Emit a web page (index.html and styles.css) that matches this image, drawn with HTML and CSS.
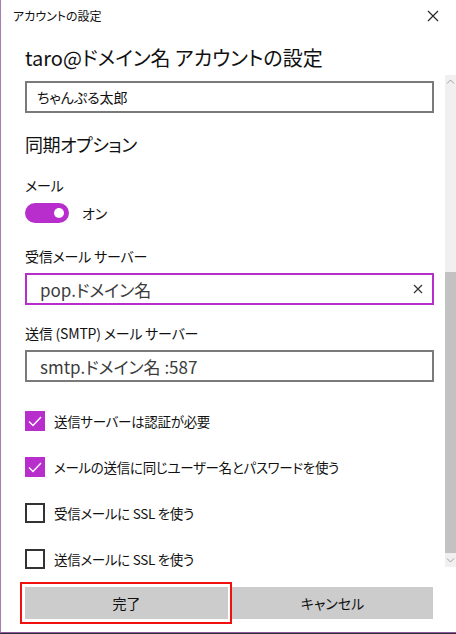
FILE: index.html
```html
<!DOCTYPE html>
<html>
<head>
    <title>アカウントの設定</title>
    <link rel="stylesheet" href="styles.css">
</head>
<body>
    <div class="window">
        <div class="titlebar">
            <span class="title">アカウントの設定</span>
            <svg class="close" width="12" height="12" viewBox="0 0 12 12">
                <path d="M1 1 L11 11 M11 1 L1 11" stroke="#222" stroke-width="1.1" fill="none"/>
            </svg>
        </div>
        <h1 class="heading">taro@ドメイン名 アカウントの設定</h1>
        <div class="scroll-row">
            <div class="content">
                <div class="textbox small">ちゃんぷる太郎</div>

                <h2 class="section">同期オプション</h2>

                <div class="label">メール</div>
                <div class="toggle-row">
                    <span class="toggle"><span class="knob"></span></span>
                    <span class="toggle-text">オン</span>
                </div>

                <div class="label gap">受信メール サーバー</div>
                <div class="textbox large focused">
                    <span>pop.ドメイン名</span>
                    <svg class="clear" width="10" height="10" viewBox="0 0 10 10">
                        <path d="M1 1 L9 9 M9 1 L1 9" stroke="#333" stroke-width="1.2" fill="none"/>
                    </svg>
                </div>

                <div class="label gap">送信 (SMTP) メール サーバー</div>
                <div class="textbox large">smtp.ドメイン名 :587</div>

                <div class="checks">
                    <div class="check-row">
                        <span class="checkbox checked">
                            <svg width="20" height="20" viewBox="0 0 20 20"><path d="M4 10.5 L8 14.5 L16 6" stroke="#fff" stroke-width="1.4" fill="none"/></svg>
                        </span>
                        <span>送信サーバーは認証が必要</span>
                    </div>
                    <div class="check-row">
                        <span class="checkbox checked">
                            <svg width="20" height="20" viewBox="0 0 20 20"><path d="M4 10.5 L8 14.5 L16 6" stroke="#fff" stroke-width="1.4" fill="none"/></svg>
                        </span>
                        <span>メールの送信に同じユーザー名とパスワードを使う</span>
                    </div>
                    <div class="check-row">
                        <span class="checkbox"></span>
                        <span>受信メールに SSL を使う</span>
                    </div>
                    <div class="check-row">
                        <span class="checkbox"></span>
                        <span>送信メールに SSL を使う</span>
                    </div>
                </div>
            </div>
            <div class="scrollbar">
                <div class="arrow">
                    <svg width="11" height="8" viewBox="0 0 11 8"><path d="M2 5.5 L5.5 2 L9 5.5" stroke="#a0a0a0" stroke-width="1" fill="none"/></svg>
                </div>
                <div class="track"></div>
                <div class="thumb"></div>
                <div class="arrow">
                    <svg width="11" height="8" viewBox="0 0 11 8"><path d="M2 2.5 L5.5 6 L9 2.5" stroke="#a0a0a0" stroke-width="1" fill="none"/></svg>
                </div>
            </div>
        </div>
        <div class="footer">
            <div class="highlight">
                <button class="btn">完了</button>
            </div>
            <button class="btn cancel">キャンセル</button>
        </div>
    </div>
</body>
</html>
```

FILE: styles.css
```css
html, body {
    margin: 0;
    padding: 0;
}

body {
    width: 456px;
    height: 634px;
    background-color: #2d2a3a;
    font-family: "Noto Sans CJK JP", "Noto Sans", sans-serif;
    font-feature-settings: "palt";
    color: #111;
    overflow: hidden;
}

.window {
    height: 632px;
    background-color: #fff;
    border-left: 1px solid #a77db3;
    border-bottom: 1px solid #8c5a9c;
    display: flex;
    flex-direction: column;
}

.titlebar {
    height: 32px;
    display: flex;
    align-items: center;
    justify-content: space-between;
    padding: 0 17px 0 12px;
}

.title {
    font-size: 12px;
}

.heading {
    margin: 0;
    height: 44px;
    box-sizing: border-box;
    padding: 13px 0 0 24px;
    font-size: 20px;
    font-weight: normal;
    line-height: 28px;
}

.scroll-row {
    display: flex;
}

.content {
    flex: 1;
    padding: 6px 11px 13px 24px;
}

.textbox {
    height: 32px;
    box-sizing: border-box;
    border: 2px solid #7a7a7a;
    display: flex;
    align-items: center;
    justify-content: space-between;
}

.textbox.small {
    font-size: 14px;
    padding-left: 10px;
}

.textbox.large {
    font-size: 17px;
    color: #3c3c3c;
    padding: 0 9px 0 13px;
}

.textbox.focused {
    border-color: #b72ecd;
}

.section {
    margin: 19px 0 0;
    font-size: 18px;
    font-weight: normal;
    line-height: 24px;
    letter-spacing: -0.5px;
}

.label {
    margin-top: 19px;
    font-size: 14px;
    line-height: 20px;
    letter-spacing: -0.2px;
}

.label.gap {
    margin-top: 23px;
    margin-bottom: 7px;
}

.textbox + .label.gap {
    margin-top: 18px;
}

.toggle-row {
    margin-top: 8px;
    display: flex;
    align-items: center;
    height: 20px;
}

.toggle {
    width: 44px;
    height: 20px;
    border-radius: 10px;
    background-color: #b72ecd;
    display: flex;
    align-items: center;
    justify-content: flex-end;
    padding-right: 5px;
    box-sizing: border-box;
}

.knob {
    width: 10px;
    height: 10px;
    border-radius: 50%;
    background-color: #fff;
}

.toggle-text {
    margin-left: 13px;
    font-size: 14px;
}

.checks {
    margin-top: 29px;
    display: flex;
    flex-direction: column;
    gap: 26px;
}

.check-row {
    display: flex;
    align-items: center;
    height: 20px;
    font-size: 13.5px;
    letter-spacing: -0.3px;
}

.checkbox {
    width: 20px;
    height: 20px;
    box-sizing: border-box;
    border: 2px solid #333;
    margin-right: 9px;
    display: flex;
}

.checkbox.checked {
    border: none;
    background-color: #b72ecd;
}

.scrollbar {
    width: 11px;
    height: 492px;
    background-color: #f0f0f0;
    display: flex;
    flex-direction: column;
}

.arrow {
    height: 14px;
    display: flex;
    align-items: center;
    justify-content: center;
}

.track {
    flex: 1;
}

.thumb {
    height: 281px;
    background-color: #c2c2c2;
}

.footer {
    margin-top: auto;
    display: flex;
    padding: 0 22px 8px 19px;
}

.highlight {
    border: 2px solid #f01010;
    padding: 3px 2px 3px 3px;
}

.btn {
    width: 203px;
    height: 32px;
    border: none;
    background-color: #cccccc;
    font-family: "Noto Sans CJK JP", "Noto Sans", sans-serif;
    font-feature-settings: "palt";
    font-size: 14px;
    color: #111;
    padding: 0;
}

.btn.cancel {
    width: 201px;
    margin-top: 5px;
}
```
